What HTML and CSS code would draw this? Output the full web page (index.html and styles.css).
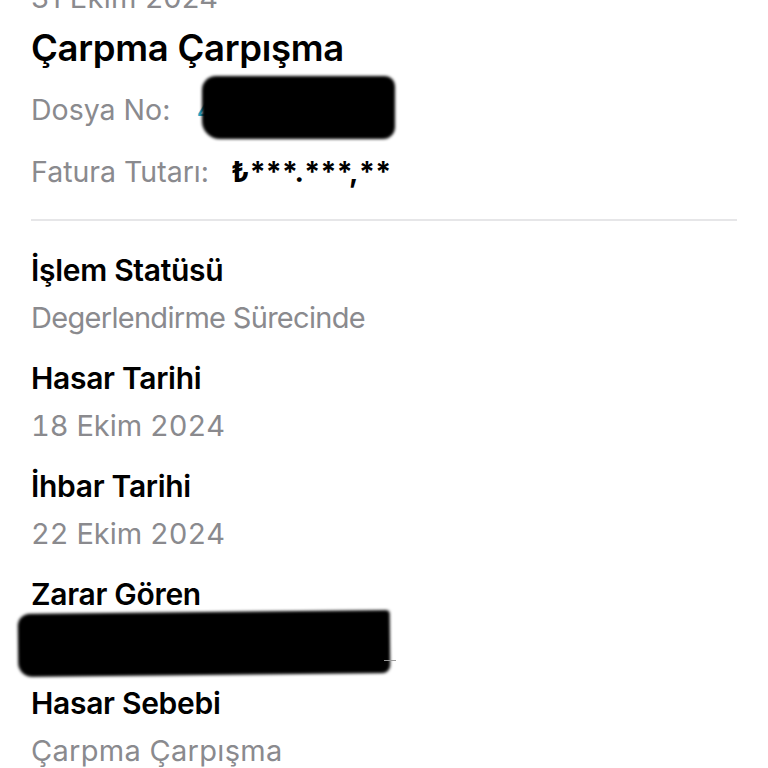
FILE: index.html
```html
<!DOCTYPE html>
<html lang="tr">
<head>
<meta charset="utf-8">
<title>Hasar Detayı</title>
<link rel="stylesheet" href="styles.css">
</head>
<body>
<div class="page">
  <div class="date">31 Ekim 2024</div>
  <h1 class="title">Çarpma Çarpışma</h1>
  <div class="meta first-meta">
    <span class="meta-label">Dosya No:</span>
    <span class="redacted-inline"><span class="peek">4</span><span class="blob blob-dosya"></span></span>
  </div>
  <div class="meta">
    <span class="meta-label">Fatura Tutarı:</span>
    <span class="amount">₺***.***,**</span>
  </div>
  <div class="divider"></div>
  <div class="group first">
    <div class="label">İşlem Statüsü</div>
    <div class="value">Degerlendirme Sürecinde</div>
  </div>
  <div class="group">
    <div class="label">Hasar Tarihi</div>
    <div class="value num">18 Ekim 2024</div>
  </div>
  <div class="group">
    <div class="label">İhbar Tarihi</div>
    <div class="value num">22 Ekim 2024</div>
  </div>
  <div class="group">
    <div class="label">Zarar Gören</div>
    <div class="value redacted-row"><span class="blob blob-row"></span><span class="tail"></span></div>
  </div>
  <div class="group">
    <div class="label">Hasar Sebebi</div>
    <div class="value wide">Çarpma Çarpışma</div>
  </div>
</div>
</body>
</html>
```

FILE: styles.css
```css
html, body {
  margin: 0;
  padding: 0;
  background: #ffffff;
  overflow: hidden;
}

.page {
  width: 768px;
  height: 768px;
  overflow: hidden;
  padding: 0 31px;
  box-sizing: border-box;
  font-family: Inter, "Noto Sans", "Liberation Sans", sans-serif;
  color: #000;
}

.date {
  font-size: 29px;
  line-height: 28px;
  color: #8a8a8e;
  margin-top: -16px;
  height: 28px;
  letter-spacing: 0.3px;
}

.title {
  margin: 7px 0 0;
  font-size: 36.5px;
  font-weight: 600;
  line-height: 58px;
  letter-spacing: -0.3px;
}

.meta {
  display: flex;
  align-items: center;
  height: 62px;
  font-size: 28.5px;
  line-height: 62px;
}

.first-meta {
  margin-top: 2px;
}

.meta-label {
  color: #8a8a8e;
  margin-right: 22px;
}

.amount {
  font-weight: 700;
  font-size: 28.5px;
  letter-spacing: 0.3px;
}

.redacted-inline {
  position: relative;
  display: inline-block;
  width: 200px;
  height: 62px;
}

.peek {
  color: #2aa6c4;
  position: absolute;
  left: 4px;
  top: 0;
}

.blob {
  position: absolute;
  background: #000;
  filter: blur(1.5px);
}

.blob-dosya {
  left: 10px;
  top: -3px;
  width: 193px;
  height: 63px;
  border-radius: 14px 10px 12px 18px;
}

.divider {
  height: 2px;
  background: #e6e6e8;
  margin: 16px 0 0;
}

.group {
  margin-top: 12px;
}

.group.first {
  margin-top: 25px;
}

.label {
  font-size: 30px;
  font-weight: 600;
  line-height: 48px;
  letter-spacing: -0.3px;
}

.value {
  font-size: 29px;
  line-height: 48px;
  color: #8a8a8e;
  letter-spacing: -0.7px;
}

.value.num {
  letter-spacing: 0;
  font-variant-numeric: tabular-nums;
}

.value.wide {
  letter-spacing: 0.3px;
}

.redacted-row {
  position: relative;
  height: 49px;
  margin-left: -31px;
}

.blob-row {
  left: 18px;
  top: -6px;
  width: 372px;
  height: 63px;
  border-radius: 12px 4px 8px 14px;
  transform: rotate(-0.6deg);
}

.tail {
  position: absolute;
  left: 384px;
  top: 42px;
  width: 12px;
  height: 1px;
  background: #9a9a9a;
}
```
